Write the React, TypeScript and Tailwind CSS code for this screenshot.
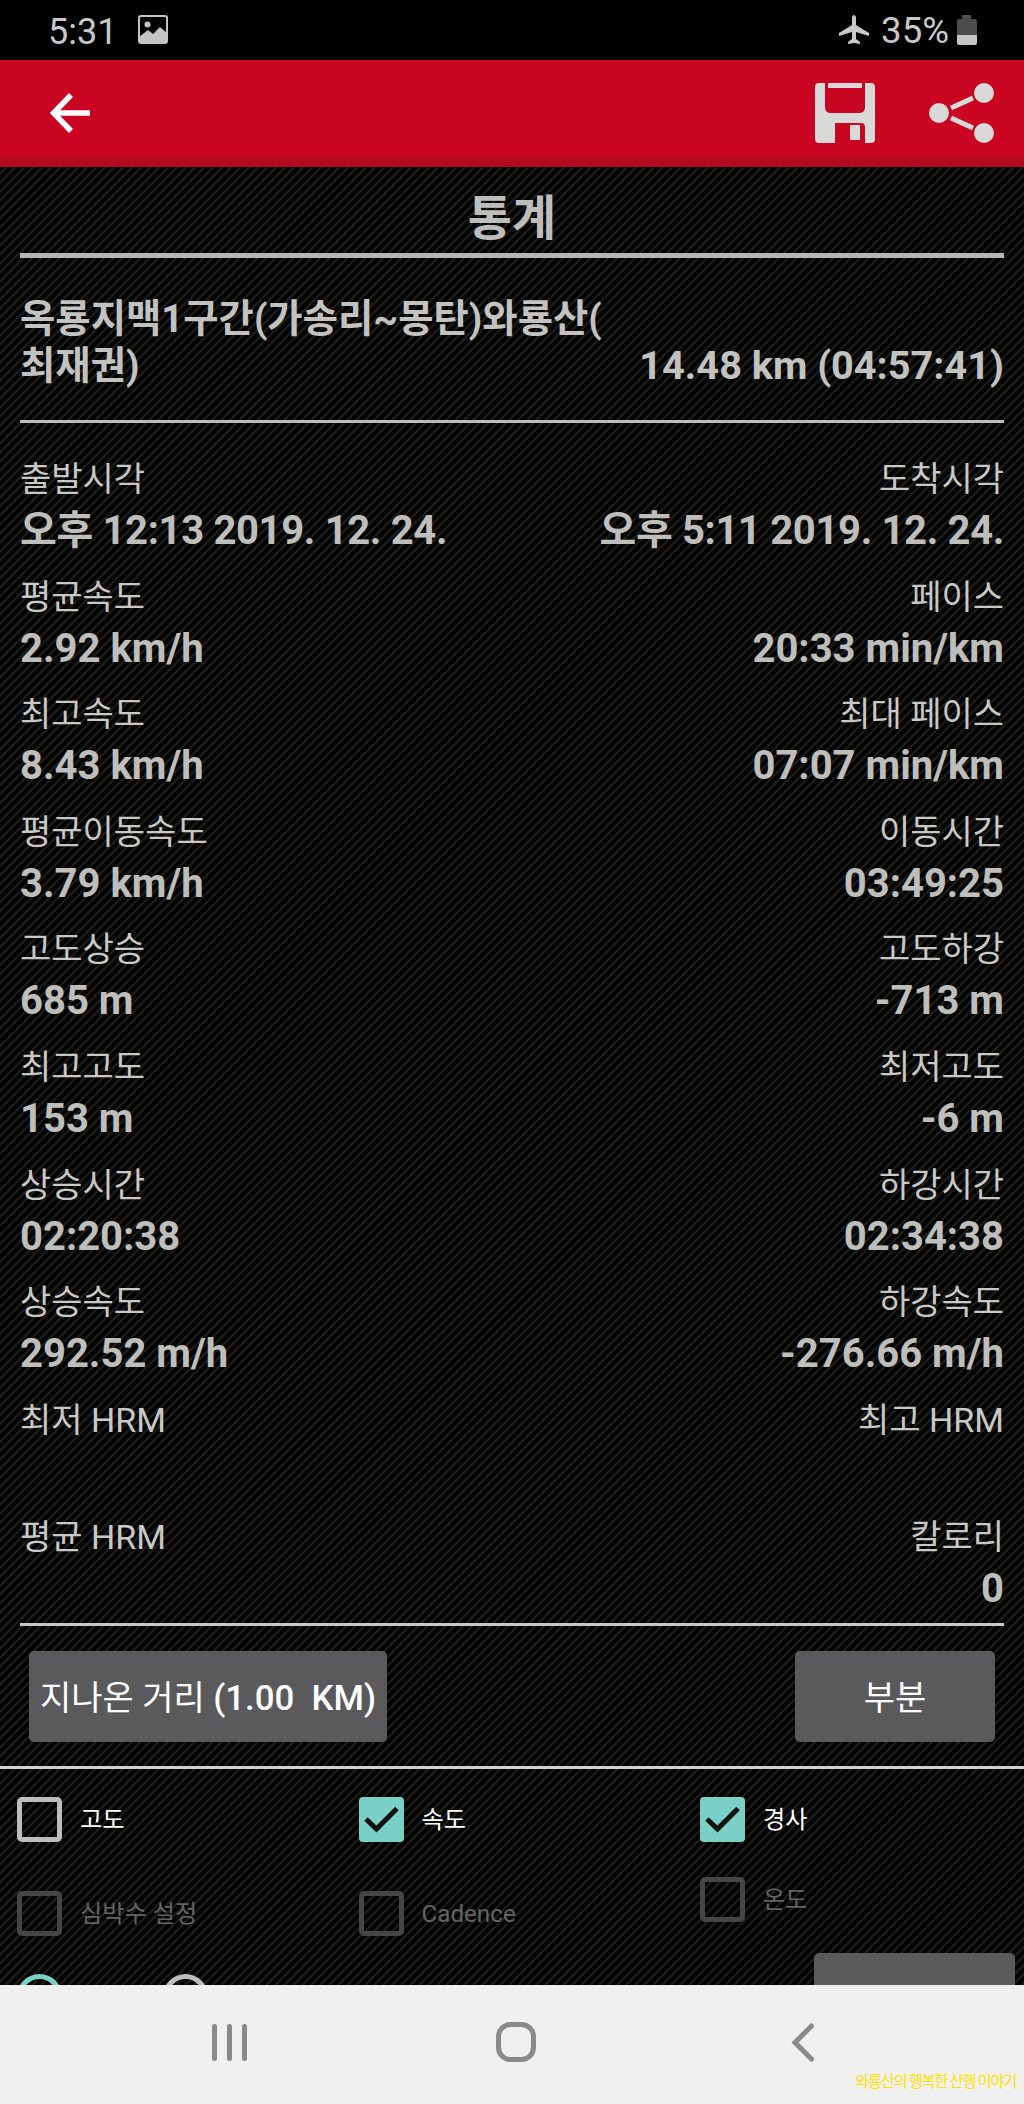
import React from 'react';

type Stat = { label: string; value: string; isDate?: boolean };

const stats: [Stat, Stat][] = [
  [
    { label: '출발시각', value: '오후 12:13 2019. 12. 24.', isDate: true },
    { label: '도착시각', value: '오후 5:11 2019. 12. 24.', isDate: true },
  ],
  [{ label: '평균속도', value: '2.92 km/h' }, { label: '페이스', value: '20:33 min/km' }],
  [{ label: '최고속도', value: '8.43 km/h' }, { label: '최대 페이스', value: '07:07 min/km' }],
  [{ label: '평균이동속도', value: '3.79 km/h' }, { label: '이동시간', value: '03:49:25' }],
  [{ label: '고도상승', value: '685 m' }, { label: '고도하강', value: '-713 m' }],
  [{ label: '최고고도', value: '153 m' }, { label: '최저고도', value: '-6 m' }],
  [{ label: '상승시간', value: '02:20:38' }, { label: '하강시간', value: '02:34:38' }],
  [{ label: '상승속도', value: '292.52 m/h' }, { label: '하강속도', value: '-276.66 m/h' }],
  [{ label: '최저 HRM', value: '' }, { label: '최고 HRM', value: '' }],
  [{ label: '평균 HRM', value: '' }, { label: '칼로리', value: '0' }],
];

const StatCell: React.FC<{ stat: Stat; right?: boolean }> = ({ stat, right }) => (
  <div className={right ? 'text-right' : ''}>
    <div className="h-12 text-[34px] leading-[46px] text-[#c8c8c6]">{stat.label}</div>
    <div className={`h-[54px] text-[40px] leading-[54px] font-bold text-[#bebebc] ${stat.isDate ? 'tracking-[-0.35px]' : ''}`}>
      {stat.value}
    </div>
  </div>
);

const CheckItem: React.FC<{ label: string; checked?: boolean; disabled?: boolean }> = ({ label, checked, disabled }) => (
  <div className="flex items-center gap-[18px] h-[45px]">
    {checked ? (
      <svg className="size-[45px] shrink-0" viewBox="0 0 45 45">
        <rect width="45" height="45" rx="4" fill="#7bd0c5" />
        <path d="M7 22l10.500 10L38 11.500" fill="none" stroke="#111" strokeWidth="5" />
      </svg>
    ) : (
      <span className={`size-[45px] shrink-0 rounded-[5px] border-[5px] ${disabled ? 'border-[#454545]' : 'border-[#bdbdbd]'}`} />
    )}
    <span className={`pt-[2px] text-[24.2px] leading-[45px] ${disabled ? 'text-[#646464]' : 'text-white'}`}>{label}</span>
  </div>
);

export default function App() {
  return (
    <div className="w-[1024px] h-[2104px] flex flex-col overflow-hidden bg-black font-[Roboto,'Noto_Sans_CJK_KR',sans-serif] whitespace-pre">

      {/* Status bar */}
      <div className="h-[60px] shrink-0 flex items-center justify-between pl-12 pr-[47px] text-[36px] text-[#c8c8c8]">
        <div className="flex items-center gap-[21px] pt-[3px]">
          <span className="leading-none">5:31</span>
          <svg className="w-[30px] h-[29px] -mt-[4px]" viewBox="0 0 30 29">
            <rect x="1" y="1" width="28" height="27" rx="2" fill="none" stroke="#c4c4c4" strokeWidth="2" />
            <circle cx="9.500" cy="9.500" r="3" fill="#c4c4c4" />
            <path d="M1 22l9-7 5 4 7-7 7 6v10H1z" fill="#c4c4c4" />
          </svg>
        </div>
        <div className="flex items-center pt-[3px]">
          <svg className="w-8 h-[31px] mr-[11px] -mt-[4px]" viewBox="0 0 32 31">
            <path d="M14 3q2-4 4 0v8l13 8v3l-13-4v7l4 3v2l-6-1-6 1v-2l4-3v-7L1 22v-3l13-8z" fill="#c8c8c8" />
          </svg>
          <span className="leading-none text-[36.6px]">35%</span>
          <svg className="w-5 h-[30px] ml-[8px] -mt-[4px]" viewBox="0 0 20 30">
            <path d="M5 0h9v4h4q2 0 2 2v14H0V6q0-2 2-2h3z" fill="#4c4c4c" />
            <path d="M0 20h20v8q0 2-2 2H2q-2 0-2-2z" fill="#c4c4c4" />
          </svg>
        </div>
      </div>

      {/* App bar */}
      <div className="h-[107px] shrink-0 flex items-center justify-between bg-[#c90522] border-b-[10px] border-[#b00c1e] pl-[50px] pr-[30px] pt-[9px]">
        <svg className="w-10 h-10" viewBox="0 0 40 40">
          <path d="M21 2L3.500 20 21 38M3 20h37" fill="none" stroke="#fff" strokeWidth="5.500" />
        </svg>
        <div className="flex items-center gap-[54px]">
          <svg className="w-[60px] h-[60px]" viewBox="0 0 60 60">
            <path d="M4 0h6v24q0 6 6 6h28q6 0 6-6V0h6q4 0 4 4v52q0 4-4 4h-6V44q0-4-4-4H20v20H4q-4 0-4-4V4q0-4 4-4z" fill="#d9dad8" />
            <path d="M13 0h34v5H13zM35 42h10v15H35z" fill="#d9dad8" />
          </svg>
          <svg className="w-[65px] h-[60px]" viewBox="0 0 65 60">
            <g fill="#d9dad8">
              <circle cx="10" cy="30" r="10" />
              <circle cx="55" cy="10" r="10" />
              <circle cx="55" cy="50" r="10" />
            </g>
            <path d="M22 25L44 15M22 35l22 10" stroke="#d9dad8" strokeWidth="5" />
          </svg>
        </div>
      </div>

      {/* Statistics */}
      <div className="flex-1 min-h-0 overflow-hidden flex flex-col bg-[repeating-linear-gradient(135deg,#010100_0px,#010100_3px,#20201e_4.4px,#20201e_5px,#010100_6.36px)]">
        <div className="px-5 shrink-0">
          <h1 className="h-[86px] text-center text-[48px] leading-[103px] font-bold text-[#bdbdbb]">통계</h1>
          <div className="h-[5px] bg-[#b4b6b3]" />

          <div className="h-[162px] pt-[38px] flex justify-between font-bold text-[#c2c2c0]">
            <div className="text-[38.4px] leading-[46.5px]">{'옥룡지맥1구간(가송리~몽탄)와룡산(\n최재권)'}</div>
            <div className="pt-[43px] text-[39.7px] leading-[54px]">14.48 km (04:57:41)</div>
          </div>
          <div className="h-[3px] bg-[#bcbcba]" />

          <div className="h-[1200px] pt-[33px]">
            {stats.map(([left, right]) => (
              <div key={left.label} className="h-[117.6px] flex justify-between">
                <StatCell stat={left} />
                <StatCell stat={right} right />
              </div>
            ))}
          </div>
          <div className="h-[3px] bg-[#c8c6c8]" />
        </div>

        {/* Buttons */}
        <div className="h-[140px] shrink-0 pt-[25px] px-[29px] flex justify-between text-[34px] text-white">
          <button className="w-[358px] h-[91px] pt-[3px] rounded-[5px] bg-[#5a5a5c]">
            지나온 거리 <span className="font-medium text-[34.8px]">(1.00  KM)</span>
          </button>
          <button className="w-[200px] h-[91px] pt-[3px] rounded-[5px] bg-[#5a5a5c]">부분</button>
        </div>
        <div className="h-[3px] shrink-0 bg-[#d0d0d0]" />

        {/* Graph options */}
        <div className="shrink-0 pt-7 pl-[17px] grid grid-cols-[341.5px_341.5px_1fr]">
          <div className="flex flex-col gap-[49px]">
            <CheckItem label="고도" />
            <CheckItem label="심박수 설정" disabled />
          </div>
          <div className="flex flex-col gap-[49px]">
            <CheckItem label="속도" checked />
            <CheckItem label="Cadence" disabled />
          </div>
          <div className="flex flex-col gap-[35px]">
            <CheckItem label="경사" checked />
            <CheckItem label="온도" disabled />
          </div>
        </div>
        <div className="shrink-0 flex items-start pl-[17px] pr-[9px] pt-[17px]">
          <div className="mt-[21px] size-[45px] rounded-full border-[5px] border-[#7bd0c5]" />
          <div className="mt-[21px] ml-[101px] size-[45px] rounded-full border-[5px] border-[#bdbdbd]" />
          <div className="ml-auto w-[201px] h-[91px] rounded-[5px] bg-[#5a5a5c]" />
        </div>
      </div>

      {/* Navigation bar */}
      <div className="relative h-[119px] shrink-0 bg-[#f0f0f0] flex justify-between pt-[37px] pl-[211px] pr-[210px]">
        <svg className="w-[38px] h-10" viewBox="0 0 38 40">
          <path d="M3.500 4.500v32M18.500 4.500v32M33.500 4.500v32" stroke="#8a8a8a" strokeWidth="5" strokeLinecap="round" />
        </svg>
        <svg className="w-10 h-10 ml-[-9px]" viewBox="0 0 40 40">
          <rect x="2.500" y="2.500" width="35" height="35" rx="12" fill="none" stroke="#8a8a8a" strokeWidth="5" />
        </svg>
        <svg className="w-[23px] h-10" viewBox="0 0 23 40">
          <path d="M20.500 4L4 20.500l16.500 16.500" fill="none" stroke="#8a8a8a" strokeWidth="5" strokeLinecap="round" />
        </svg>
        <span className="absolute right-[8px] top-[87px] text-[15.5px] leading-[20px] tracking-[-1.45px] text-[#ffe100]">와룡산의 행복한 산행 이야기</span>
      </div>
    </div>
  );
}
